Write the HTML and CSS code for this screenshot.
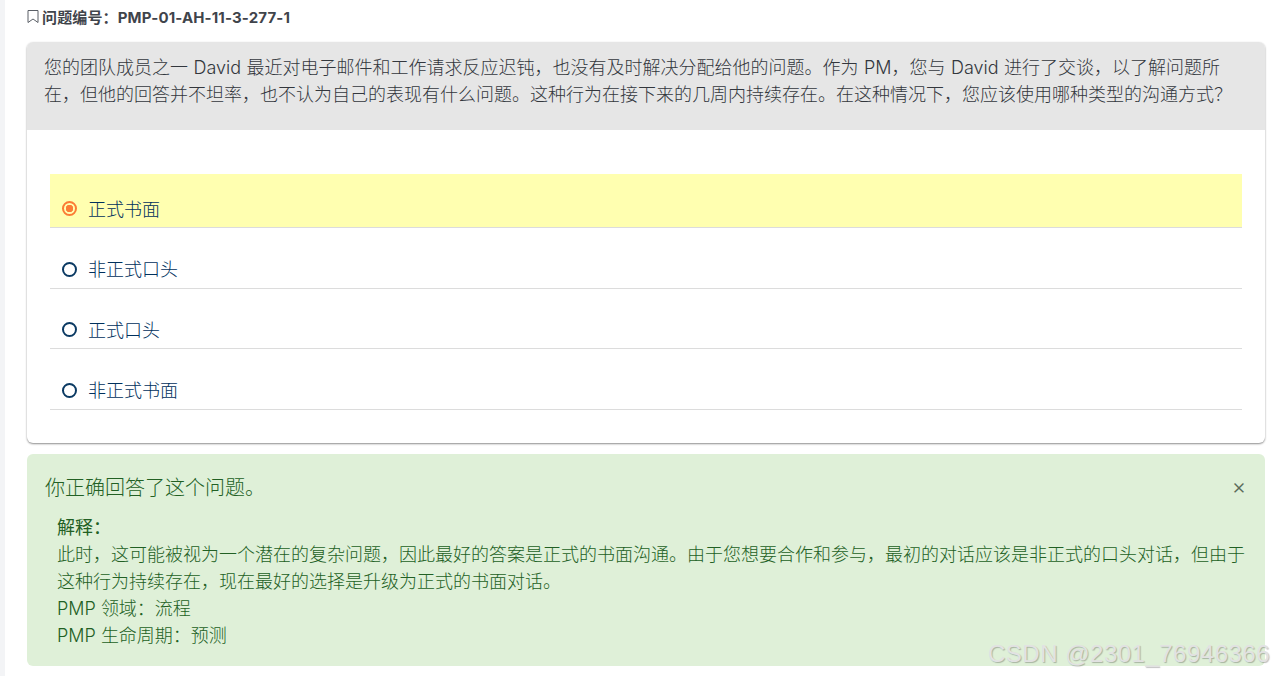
FILE: index.html
```html
<!DOCTYPE html>
<html lang="zh">
<head>
<meta charset="utf-8">
<title>问题</title>
<link rel="stylesheet" href="styles.css">
</head>
<body>
<div class="rail"></div>
<main class="main">
  <div class="qid">
    <svg class="bookmark" width="12" height="15" viewBox="0 0 12 15"><path d="M1 1.500h10v12L6 10l-5 3.500z" fill="none" stroke="#5a5f66" stroke-width="1"/></svg>
    <span class="qid-text">问题编号：PMP-01-AH-11-3-277-1</span>
  </div>
  <section class="card">
    <div class="question">您的团队成员之一 David 最近对电子邮件和工作请求反应迟钝，也没有及时解决分配给他的问题。作为 PM，您与 David 进行了交谈，以了解问题所在，但他的回答并不坦率，也不认为自己的表现有什么问题。这种行为在接下来的几周内持续存在。在这种情况下，您应该使用哪种类型的沟通方式？</div>
    <ul class="options">
      <li class="option selected"><span class="radio"></span><span class="label">正式书面</span></li>
      <li class="option"><span class="radio"></span><span class="label">非正式口头</span></li>
      <li class="option"><span class="radio"></span><span class="label">正式口头</span></li>
      <li class="option"><span class="radio"></span><span class="label">非正式书面</span></li>
    </ul>
  </section>
  <section class="alert">
    <div class="alert-head"><h2>你正确回答了这个问题。</h2><span class="close">×</span></div>
    <div class="alert-body">
      <strong>解释：</strong><br>
      此时，这可能被视为一个潜在的复杂问题，因此最好的答案是正式的书面沟通。由于您想要合作和参与，最初的对话应该是非正式的口头对话，但由于这种行为持续存在，现在最好的选择是升级为正式的书面对话。<br>
      PMP 领域：流程<br>
      PMP 生命周期：预测
    </div>
  </section>
</main>
<div class="watermark">CSDN @2301_76946366</div>
</body>
</html>
```

FILE: styles.css
```css
* { box-sizing: border-box; }
html, body { margin: 0; height: 676px; overflow: hidden; }
body {
  display: flex;
  background: #fff;
  font-family: Inter, "Noto Sans CJK SC", sans-serif;
  font-weight: 300;
  color: #33373d;
}
.rail { width: 5px; background: #f3f4f6; flex: none; }
.main { flex: 1; padding: 6px 9px 0 22px; min-width: 0; }
.qid {
  display: flex;
  align-items: center;
  gap: 3px;
  height: 20px;
  font-size: 15px;
  font-weight: 700;
  color: #3f444b;
  margin-bottom: 16px;
}
.qid-text { letter-spacing: .14px; }
.bookmark { flex: none; }
.card {
  background: #fff;
  border-radius: 6px;
  box-shadow: 0 1px 2px rgba(0,0,0,.45);
  height: 401px;
  overflow: hidden;
}
.question {
  height: 88px;
  background: #e6e6e6;
  padding: 12px 17px;
  font-size: 18px;
  line-height: 27px;
  word-spacing: .4px;
  color: #33373d;
}
.options { list-style: none; margin: 0; padding: 44px 23px 0; }
.option {
  display: flex;
  align-items: center;
  height: 54.450px;
  padding: 16px 12px 0;
  margin-bottom: 6px;
  border-bottom: 1px solid #dcdcdc;
  font-size: 18px;
  color: #00305c;
}
.label { margin-top: -2px; }
.selected { background: #ffffb0; }
.radio {
  width: 15px;
  height: 15px;
  border: 2px solid #0b3a63;
  border-radius: 50%;
  margin: 0 11px 0 0;
  flex: none;
}
.selected .radio {
  border-color: #fb7c35;
  background: radial-gradient(circle, #fb7c35 0 3.500px, transparent 4px);
}
.alert {
  margin-top: 11px;
  height: 212px;
  background: #dff0d8;
  border-radius: 6px;
  color: #226024;
  padding: 17px 18px 0;
}
.alert-head { display: flex; justify-content: space-between; align-items: center; height: 30px; }
.alert-head h2 { margin: 0; font-size: 20px; font-weight: 300; }
.close { font-size: 22px; color: #5b6b5b; margin-right: 1px; }
.alert-body {
  padding: 13px 0 0 12px;
  font-size: 18px;
  line-height: 27px;
}
.watermark {
  position: absolute;
  left: 988px;
  top: 640px;
  font-family: "Liberation Sans", sans-serif;
  font-weight: 400;
  font-size: 24px;
  letter-spacing: .5px;
  color: #e2e2e2;
  text-shadow: 1px 1px 1px rgba(0,0,0,.25);
  white-space: nowrap;
}
```
